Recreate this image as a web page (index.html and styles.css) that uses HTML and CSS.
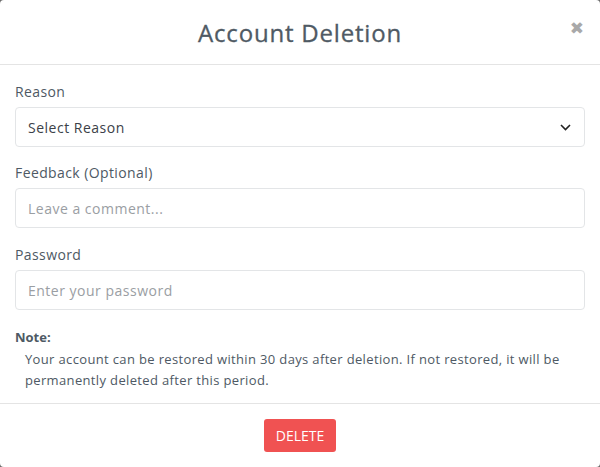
FILE: index.html
```html
<!DOCTYPE html>
<html>
<head>
<meta charset="utf-8">
<link rel="stylesheet" href="styles.css">
</head>
<body>
<div class="modal">
  <div class="modal-header">
    <h1 class="title">Account Deletion</h1>
    <span class="close">&#10006;</span>
  </div>
  <div class="modal-body">
    <div class="field">
      <label class="label">Reason</label>
      <div class="control select">
        <span class="value">Select Reason</span>
        <svg class="chevron" width="11" height="7" viewBox="0 0 11 7"><path d="M1 1l4.5 4.5L10 1" fill="none" stroke="#222" stroke-width="1.6"/></svg>
      </div>
    </div>
    <div class="field field-mid">
      <label class="label">Feedback (Optional)</label>
      <div class="control"><span class="placeholder">Leave a comment...</span></div>
    </div>
    <div class="field">
      <label class="label">Password</label>
      <div class="control"><span class="placeholder">Enter your password</span></div>
    </div>
    <div class="note">
      <div class="note-title">Note:</div>
      <p class="note-text">Your account can be restored within 30 days after deletion. If not restored, it will be permanently deleted after this period.</p>
    </div>
  </div>
  <div class="modal-footer">
    <button class="btn-delete">DELETE</button>
  </div>
</div>
</body>
</html>
```
FILE: styles.css
```css
* { box-sizing: border-box; }
html, body { margin: 0; padding: 0; }
body {
  background: #6b6b6b;
  font-family: "Open Sans", sans-serif;
  width: 600px;
  height: 467px;
}
.modal {
  width: 600px;
  height: 467px;
  background: #fff;
  border-radius: 4px;
  display: flex;
  flex-direction: column;
}
.modal-header {
  height: 65px;
  border-bottom: 1px solid #e4e4e4;
  display: flex;
  align-items: center;
  justify-content: center;
  position: relative;
}
.title {
  margin: 0;
  font-size: 24px;
  font-weight: 500;
  color: #4f5a64;
  letter-spacing: 0.8px;
  -webkit-text-stroke: 0.3px #4f5a64;
}
.close {
  position: absolute;
  right: 16px;
  top: 18px;
  font-size: 17px;
  color: #a9a9a9;
  font-family: "DejaVu Sans", sans-serif;
  font-weight: bold;
}
.modal-body {
  padding: 16px 15px 0 15px;
  flex: 1;
}
.field { margin-bottom: 15px; }
.field-mid { margin-bottom: 16px; }
.label {
  display: block;
  font-size: 14px;
  line-height: 21px;
  color: #4e5964;
  margin-bottom: 5px;
  letter-spacing: 0.4px;
}
.control {
  height: 40px;
  border: 1px solid #e3e5e7;
  border-radius: 4px;
  display: flex;
  align-items: center;
  padding: 0 12px;
  font-size: 14px;
  letter-spacing: 0.5px;
}
.select { justify-content: space-between; padding-right: 13px; }
.value { color: #3b4148; }
.placeholder { color: #9a9ea3; }
.note { padding-top: 2px; }
.note-title {
  font-size: 13px;
  font-weight: 700;
  color: #4e5964;
  line-height: 20px;
}
.note-text {
  margin: 2px 0 0 0;
  padding-left: 10px;
  font-size: 13px;
  line-height: 21px;
  color: #4e5964;
  letter-spacing: 0.35px;
}
.modal-footer {
  height: 64px;
  border-top: 1px solid #e4e4e4;
  display: flex;
  align-items: center;
  justify-content: center;
}
.btn-delete {
  width: 72px;
  height: 33px;
  background: #f05252;
  color: #fff;
  border: none;
  border-radius: 3px;
  font-family: "Open Sans", sans-serif;
  font-size: 14px;
  padding: 0;
}
```
